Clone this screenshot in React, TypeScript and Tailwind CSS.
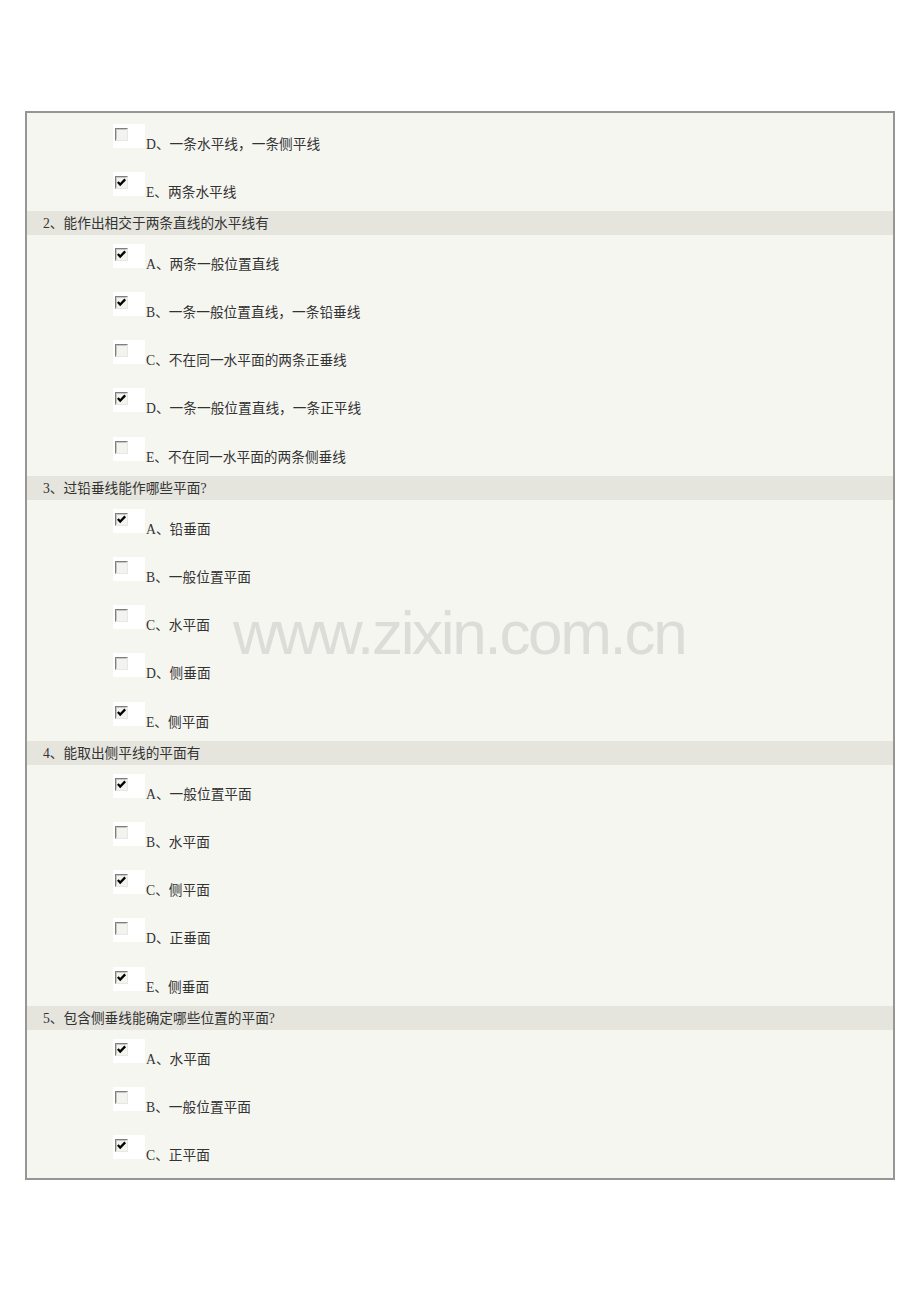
import React from "react";

type Opt = { label: string; checked: boolean; tall?: boolean };
type Group = { title?: string; options: Opt[] };

const groups: Group[] = [
  {
    options: [
      { label: "D、一条水平线，一条侧平线", checked: false },
      { label: "E、两条水平线", checked: true },
    ],
  },
  {
    title: "2、能作出相交于两条直线的水平线有",
    options: [
      { label: "A、两条一般位置直线", checked: true },
      { label: "B、一条一般位置直线，一条铅垂线", checked: true },
      { label: "C、不在同一水平面的两条正垂线", checked: false },
      { label: "D、一条一般位置直线，一条正平线", checked: true, tall: true },
      { label: "E、不在同一水平面的两条侧垂线", checked: false },
    ],
  },
  {
    title: "3、过铅垂线能作哪些平面?",
    options: [
      { label: "A、铅垂面", checked: true },
      { label: "B、一般位置平面", checked: false },
      { label: "C、水平面", checked: false },
      { label: "D、侧垂面", checked: false, tall: true },
      { label: "E、侧平面", checked: true },
    ],
  },
  {
    title: "4、能取出侧平线的平面有",
    options: [
      { label: "A、一般位置平面", checked: true },
      { label: "B、水平面", checked: false },
      { label: "C、侧平面", checked: true },
      { label: "D、正垂面", checked: false, tall: true },
      { label: "E、侧垂面", checked: true },
    ],
  },
  {
    title: "5、包含侧垂线能确定哪些位置的平面?",
    options: [
      { label: "A、水平面", checked: true },
      { label: "B、一般位置平面", checked: false },
      { label: "C、正平面", checked: true },
    ],
  },
];

function Check({ checked }: { checked: boolean }) {
  return (
    <div className="mt-[9px] h-[24px] w-[32px] shrink-0 bg-white pl-[2px] pt-[4px]">
      <div className="h-[13px] w-[13px] border border-t-[#7f7f7f] border-l-[#7f7f7f] border-r-[#e8e8e2] border-b-[#e8e8e2]">
        <div className="h-full w-full border border-t-[#c8c8c0] border-l-[#c8c8c0] border-r-[#f2f2ee] border-b-[#f2f2ee] bg-[#f3f3ef]">
          {checked && (
            <svg viewBox="0 0 9 9" className="block h-[9px] w-[9px]">
              <polyline
                points="0.8,4 3.2,6.6 8.2,1.4"
                fill="none"
                stroke="#000"
                strokeWidth="2.3"
              />
            </svg>
          )}
        </div>
      </div>
    </div>
  );
}

function OptionRow({ opt }: { opt: Opt }) {
  return (
    <div className={`flex items-start pl-[86px] ${opt.tall ? "h-[49px]" : "h-[48px]"}`}>
      <Check checked={opt.checked} />
      <div className="mt-[22px] ml-[1px] text-[13.7px] leading-[16px] text-[#333]">{opt.label}</div>
    </div>
  );
}

export default function App() {
  return (
    <div
      className="relative min-h-[1302px] w-[920px] bg-white pt-[111px]"
      style={{ fontFamily: '"Liberation Serif", "Noto Sans CJK SC", serif' }}
    >
      <div className="ml-[25px] w-[870px] border-2 border-[#969696] bg-[#f6f6f1] pt-[2px] pb-[4px]">
        {groups.map((g, i) => (
          <div key={i}>
            {g.title && (
              <div className="flex h-[24px] items-center bg-[#e5e5de] pl-[16px] pt-[1px] text-[13.7px] leading-[16px] text-[#333]">
                {g.title}
              </div>
            )}
            {g.options.map((o, j) => (
              <OptionRow key={j} opt={o} />
            ))}
          </div>
        ))}
      </div>
      <div
        className="pointer-events-none absolute left-[233px] top-[602px] text-[62px] leading-[62px] tracking-[-2.3px] text-[#dcdcd8]"
        style={{ fontFamily: '"Liberation Sans", Arial, sans-serif' }}
      >
        www.zixin.com.cn
      </div>
    </div>
  );
}
